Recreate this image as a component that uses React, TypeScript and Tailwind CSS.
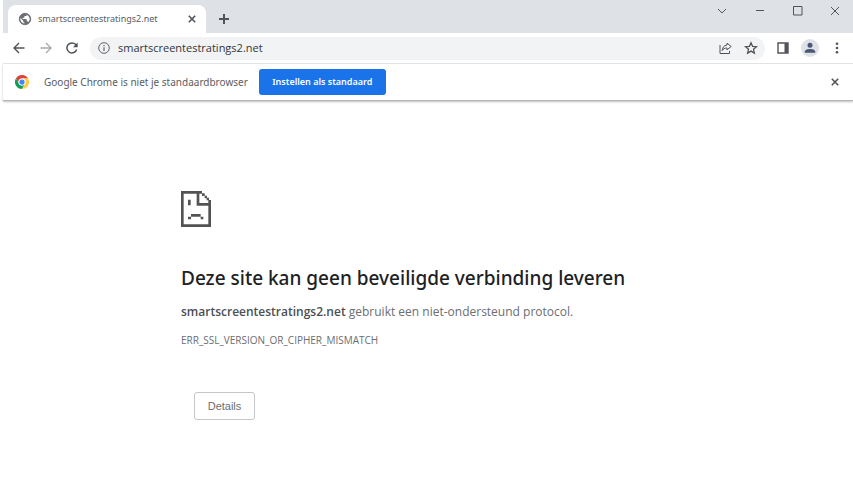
import React from "react";

const stroke = { fill: "none", stroke: "currentColor" } as const;

function Globe() {
  return (
    <svg viewBox="0 0 24 24" className="h-3.5 w-3.5 shrink-0 text-[#6b6e72]" fill="currentColor" aria-hidden="true">
      <path d="M12 2a10 10 0 1 0 0 20 10 10 0 0 0 0-20Zm-1 17.900A8 8 0 0 1 4.200 10.200L9 15v1a2 2 0 0 0 2 2Zm6.900-2.500A2 2 0 0 0 16 16h-1v-3a1 1 0 0 0-1-1H8v-2h2a1 1 0 0 0 1-1V7h2a2 2 0 0 0 2-2v-.4a8 8 0 0 1 2.900 12.800Z" />
      <circle cx="12" cy="12" r="9.800" fill="none" stroke="currentColor" strokeWidth="1.500" />
    </svg>
  );
}

function ChromeLogo() {
  return (
    <svg viewBox="0 0 48 48" className="h-3.5 w-3.5 shrink-0" aria-hidden="true">
      <circle cx="24" cy="24" r="24" fill="#fff" />
      <path fill="#db4437" d="M3.200 12A24 24 0 0 1 44.800 12H24A12 12 0 0 0 13.600 30Z" />
      <path fill="#0f9d58" d="M24 48A24 24 0 0 1 3.200 12L13.600 30A12 12 0 0 0 34.400 30Z" />
      <path fill="#ffcd40" d="M44.800 12A24 24 0 0 1 24 48L34.400 30A12 12 0 0 0 24 12Z" />
      <circle cx="24" cy="24" r="12" fill="#fff" />
      <circle cx="24" cy="24" r="9" fill="#4285f4" />
    </svg>
  );
}

function Cross({ className }: { className: string }) {
  return (
    <svg viewBox="0 0 10 10" className={className} {...stroke} aria-hidden="true">
      <path d="m1 1 8 8M9 1 1 9" />
    </svg>
  );
}

function IconButton({ label, className = "", children }: { label: string; className?: string; children: React.ReactNode }) {
  return (
    <button type="button" aria-label={label} className={`flex shrink-0 items-center justify-center text-[#505357] ${className}`}>
      {children}
    </button>
  );
}

function TabStrip() {
  return (
    <header className="flex h-[33px] bg-[#dee1e6]">
      <div className="mt-[5px] ml-[5px] flex w-[198px] items-center rounded-t-lg bg-white pr-2 pl-2.5">
        <Globe />
        <span className="ml-1.5 flex-1 text-[9px] text-[#5a5d61]">smartscreentestratings2.net</span>
        <IconButton label="Tabblad sluiten" className="h-3 w-3 text-[#3c4043]">
          <Cross className="h-2 w-2 stroke-2" />
        </IconButton>
      </div>
      <IconButton label="Nieuw tabblad" className="mt-1 ml-2.5 h-[30px] w-4">
        <svg viewBox="0 0 10 10" className="h-2.5 w-2.5" {...stroke} strokeWidth="2" aria-hidden="true">
          <path d="M5 0v10M0 5h10" />
        </svg>
      </IconButton>
      <div className="ml-auto flex h-[22px]">
        <IconButton label="Tabbladen zoeken" className="w-[38px]">
          <svg viewBox="0 0 10 10" className="h-2.5 w-2.5" {...stroke} aria-hidden="true"><path d="m1 3 4 4 4-4" /></svg>
        </IconButton>
        <IconButton label="Minimaliseren" className="w-[38px]">
          <svg viewBox="0 0 10 10" className="h-2.5 w-2.5" {...stroke} aria-hidden="true"><path d="M1 4.500h8" /></svg>
        </IconButton>
        <IconButton label="Maximaliseren" className="w-[38px]">
          <svg viewBox="0 0 10 10" className="h-2.5 w-2.5" {...stroke} aria-hidden="true"><path d="M.5.5h8.500v8.500H.5Z" /></svg>
        </IconButton>
        <IconButton label="Sluiten" className="w-9"><Cross className="h-2.5 w-2.5" /></IconButton>
      </div>
    </header>
  );
}

function Toolbar() {
  return (
    <nav className="flex h-[31px] items-center border-b border-[#e4e6e8] px-2">
      <IconButton label="Terug" className="w-4">
        <svg viewBox="0 0 12 12" className="h-3 w-3" {...stroke} strokeWidth="1.400" aria-hidden="true"><path d="M11.500 6H1M6 1 1 6l5 5" /></svg>
      </IconButton>
      <IconButton label="Vooruit" className="ml-[11px] w-4 opacity-50">
        <svg viewBox="0 0 12 12" className="h-3 w-3" {...stroke} strokeWidth="1.300" aria-hidden="true"><path d="M.5 6H11M6 1l5 5-5 5" /></svg>
      </IconButton>
      <IconButton label="Opnieuw laden" className="ml-2.5 w-4">
        <svg viewBox="0 0 12 12" className="h-3 w-3" {...stroke} strokeWidth="1.500" aria-hidden="true">
          <path d="M10.700 7.400A5 5 0 1 1 9.700 2.600L11 4" />
          <path d="M11.600.5v4.700H7Z" fill="currentColor" stroke="none" />
        </svg>
      </IconButton>
      <div className="ml-2.5 flex h-[23px] flex-1 items-center rounded-full bg-[#f1f3f4] pr-1.5 pl-2">
        <svg viewBox="0 0 12 12" className="h-3 w-3 shrink-0 text-[#5f6368]" {...stroke} aria-hidden="true">
          <circle cx="6" cy="6" r="5.300" /><path d="M6 5.200V9M6 3v1.200" strokeWidth="1.200" />
        </svg>
        <input aria-label="Adres" defaultValue="smartscreentestratings2.net" className="ml-2 min-w-0 flex-1 bg-transparent font-['Open_Sans',sans-serif] text-[11px] text-[#33363a] outline-none" />
        <IconButton label="Delen" className="w-4">
          <svg viewBox="0 0 13 12" className="h-3 w-[13px]" {...stroke} aria-hidden="true">
            <path d="M1 3v8.500h9.500V9" /><path d="M8 1.200 12.200 4.500 8 7.800V6C5.500 6 4.200 7 3.200 8.500 3.500 5.500 5 3.400 8 3Z" />
          </svg>
        </IconButton>
        <IconButton label="Bladwijzer" className="ml-2.5 w-4">
          <svg viewBox="0 0 24 24" className="h-3.5 w-3.5" {...stroke} strokeWidth="2.200" aria-hidden="true">
            <path d="m12 3 2.700 6.200 6.700.6-5.100 4.400 1.500 6.600-5.800-3.500-5.800 3.500 1.500-6.600-5.100-4.400 6.700-.6Z" />
          </svg>
        </IconButton>
      </div>
      <IconButton label="Zijvenster" className="ml-2.5 w-4">
        <svg viewBox="0 0 12 12" className="h-3 w-3" aria-hidden="true"><path d="M1 1h10v10H1Z" {...stroke} strokeWidth="1.400" /><path d="M7.500 1H11v10H7.500Z" fill="currentColor" /></svg>
      </IconButton>
      <IconButton label="Profiel" className="ml-2.5 h-[18px] w-[18px] rounded-full bg-[#dee1e8]">
        <svg viewBox="0 0 12 12" className="h-3 w-3 text-[#4b5673]" fill="currentColor" aria-hidden="true"><circle cx="6" cy="3.300" r="2.500" /><path d="M.8 10.800V9.500C.8 7.800 4 7 6 7s5.200.8 5.200 2.500v1.300Z" /></svg>
      </IconButton>
      <IconButton label="Menu" className="ml-2.5 w-4">
        <svg viewBox="0 0 4 12" className="h-3 w-1" fill="currentColor" aria-hidden="true"><circle cx="2" cy="1.800" r="1.300" /><circle cx="2" cy="6" r="1.300" /><circle cx="2" cy="10.200" r="1.300" /></svg>
      </IconButton>
    </nav>
  );
}

function InfoBar() {
  return (
    <div className="flex h-[37px] items-center border-b border-[#b4b4b4] px-3 shadow-[0_1px_2px_rgba(0,0,0,0.250)]">
      <ChromeLogo />
      <p className="ml-[15px] text-[10px] text-[#5a5d61]">Google Chrome is niet je standaardbrowser</p>
      <button type="button" className="ml-[11px] h-[26px] w-[127px] rounded-[3px] bg-[#1a73e8] text-[9px] font-semibold text-white">Instellen als standaard</button>
      <IconButton label="Melding sluiten" className="ml-auto h-3 w-3"><Cross className="h-2 w-2 stroke-2" /></IconButton>
    </div>
  );
}

function SadPage() {
  return (
    <svg viewBox="0 0 90 108" className="h-9 w-[30px]" fill="#535353" aria-hidden="true">
      <path d="M0 0h63v8H8v92h74V44H47V8h8v28h27V27h8v81H0Z" />
      <path d="M63 7h8v8h-8ZM71 14h7v8h-7ZM77 20h7v8h-7Z" />
      <path d="M21 26h8v17h-8ZM30 69h29v8H30ZM21 77h9v8h-9ZM59 77h8v8h-8Z" />
    </svg>
  );
}

export default function App() {
  return (
    <div className="min-h-screen bg-white pl-[3px] font-['Noto_Sans',sans-serif]">
      <TabStrip />
      <Toolbar />
      <InfoBar />
      <main className="px-[178px] pt-[90px] font-['Open_Sans',sans-serif] text-[#6b6e72]">
        <SadPage />
        <h1 className="mt-[35px] font-['Noto_Sans',sans-serif] text-[19px] leading-8 font-medium whitespace-nowrap text-[#202124]">Deze site kan geen beveiligde verbinding leveren</h1>
        <p className="mt-2 text-[12px] leading-5 whitespace-nowrap"><strong className="font-semibold text-[#4c4f53]">smartscreentestratings2.net</strong> gebruikt een niet-ondersteund protocol.</p>
        <p className="mt-2.5 text-[10px] leading-4">ERR_SSL_VERSION_OR_CIPHER_MISMATCH</p>
        <button type="button" className="mt-11 ml-[13px] h-7 w-[61px] rounded-[3px] border border-[#c4c6c9] font-['Liberation_Sans',sans-serif] text-[11px]">Details</button>
      </main>
    </div>
  );
}
